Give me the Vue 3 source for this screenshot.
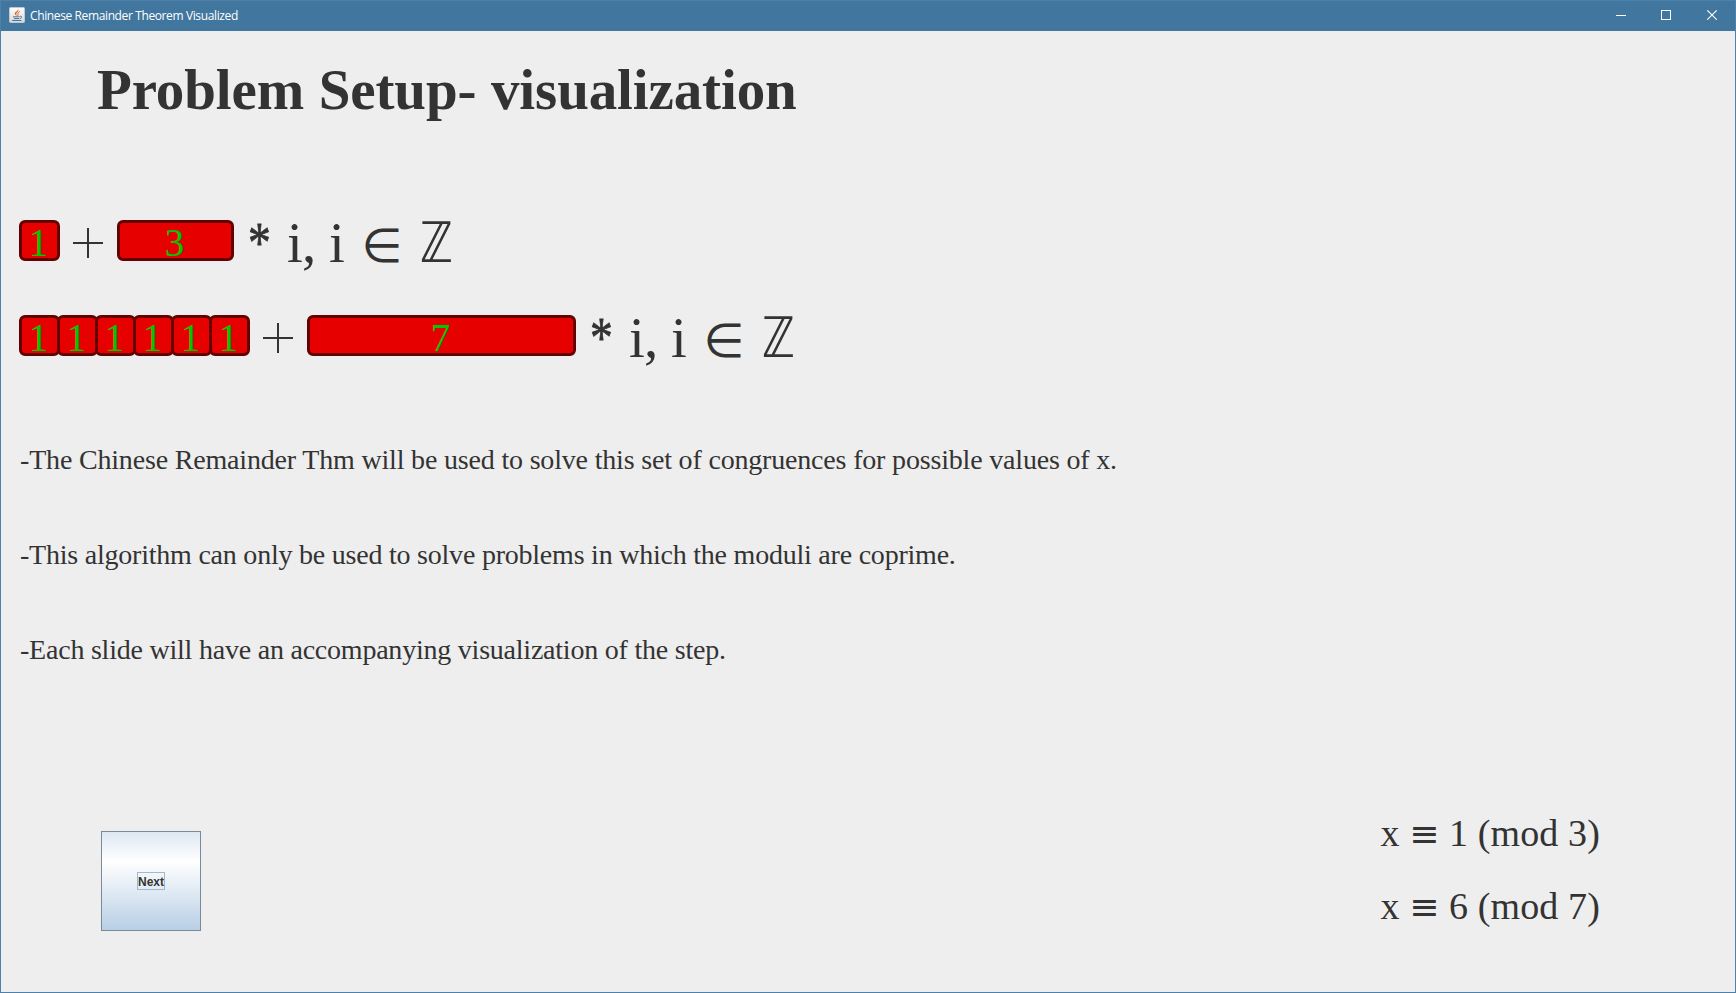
<script setup>
const rows = [
  { ones: 1, modulus: 3 },
  { ones: 6, modulus: 7 },
]
const congruences = [
  { r: 1, m: 3 },
  { r: 6, m: 7 },
]
const UNIT = 38
</script>

<template>
  <div class="window">
    <header class="titlebar">
      <svg class="java" width="16" height="16" viewBox="0 0 16 16">
        <defs>
          <linearGradient id="jbg" x1="0" y1="0" x2="0" y2="1">
            <stop offset="0" stop-color="#ffffff" />
            <stop offset="1" stop-color="#d3d6d9" />
          </linearGradient>
        </defs>
        <rect x="0.5" y="0.5" width="15" height="15" rx="1" fill="url(#jbg)" stroke="#c3c8cc" />
        <path d="M9 1.6C9.8 4.4 4.8 5 6 7.2L7.6 9.2C7.6 7.4 6.6 7 8 5.6S9.8 3.6 9 1.6Z" fill="#e2601f" />
        <path d="M10.8 4.4C7.6 6 9.8 7 8.6 9" fill="none" stroke="#e2601f" />
        <path d="M4 9.8H10.5M5 11.6H10M3.2 13.5H12.4" fill="none" stroke="#4f7391" />
        <path d="M10.8 9.3C13.8 9.2 12.8 11 10.6 11.8" fill="none" stroke="#4f7391" />
      </svg>
      <span class="caption">Chinese Remainder Theorem Visualized</span>
      <svg class="controls" width="106" height="12" viewBox="0 0 106 12" fill="none" stroke="#fff">
        <path d="M0 6.5H10" />
        <rect x="45.5" y="1.5" width="9" height="9" />
        <path d="M91.3 1.3L100.7 10.7M100.7 1.3L91.3 10.7" stroke-width="1.2" />
      </svg>
    </header>

    <main class="content">
      <h1 class="heading">Problem Setup- visualization</h1>

      <section class="equations">
        <div v-for="row in rows" :key="row.modulus" class="equation">
          <div class="units">
            <span v-for="n in row.ones" :key="n" class="block unit">1</span>
          </div>
          <svg class="plus" width="30" height="30" viewBox="0 0 30 30" role="img" aria-label="+">
            <path d="M0 15H30M15 0V30" stroke="#333" stroke-width="2" />
          </svg>
          <span class="block" :style="{ width: row.modulus * UNIT + 3 + 'px' }">{{ row.modulus }}</span>
          <div class="term">
            <span class="times">*</span>
            <span class="vars">i, i</span>
            <span class="in">∈</span>
            <span class="zz">ℤ</span>
          </div>
        </div>
      </section>

      <section class="notes">
        <p class="n1">-The Chinese Remainder Thm will be used to solve this set of congruences for possible values of x.</p>
        <p class="n2">-This algorithm can only be used to solve problems in which the moduli are coprime.</p>
        <p class="n3">-Each slide will have an accompanying visualization of the step.</p>
      </section>

      <footer class="bottom">
        <button class="next"><span>Next</span></button>
        <div class="congruences">
          <div v-for="c in congruences" :key="c.m">x <span class="equiv">≡</span> {{ c.r }} (mod {{ c.m }})</div>
        </div>
      </footer>
    </main>
  </div>
</template>

<style>
html,
body {
  margin: 0;
  overflow: hidden;
}
</style>

<style scoped>
.window {
  box-sizing: border-box;
  width: 1736px;
  height: 993px;
  border: 1px solid #4d80aa;
  background: #eee;
  color: #333;
  font-family: 'Liberation Serif', 'Times New Roman', serif;
  overflow: hidden;
}
.titlebar {
  display: flex;
  align-items: center;
  box-sizing: border-box;
  height: 30px;
  padding: 0 13px 2px 8px;
  background: #41769e;
}
.java {
  margin-right: 5px;
}
.caption {
  padding-top: 2px;
  color: #fff;
  font: 12px/16px 'Open Sans', sans-serif;
  letter-spacing: -0.38px;
  white-space: nowrap;
}
.controls {
  margin-left: auto;
}
.content {
  display: flex;
  flex-direction: column;
  height: 961px;
}
.heading {
  margin: 26px 0 0 96px;
  font-size: 57px;
  line-height: 66px;
  letter-spacing: -0.12px;
  word-spacing: 0.5px;
  white-space: nowrap;
}
.equations {
  display: flex;
  flex-direction: column;
  gap: 54px;
  margin: 97px 0 0 18px;
}
.equation {
  display: flex;
  align-items: center;
  height: 41px;
}
.units {
  display: flex;
}
.block {
  box-sizing: border-box;
  height: 41px;
  border: 3px solid #640000;
  border-radius: 6px;
  background: #e60000;
  color: #00c800;
  font-size: 39px;
  line-height: 39px;
  text-align: center;
  text-indent: -2px;
}
.unit {
  width: 41px;
}
.unit + .unit {
  margin-left: -3px;
}
.plus {
  margin: 5px 14px 0 13px;
}
.term {
  display: flex;
  align-items: baseline;
  margin: 4px 0 0 14px;
  font-size: 57px;
  line-height: 41px;
  white-space: nowrap;
}
.times {
  width: 39px;
  transform: scaleX(0.8);
  transform-origin: left;
  -webkit-text-stroke: 0.8px #333;
}
.vars {
  width: 74.5px;
  letter-spacing: -0.8px;
}
.in,
.zz {
  font-family: 'DejaVu Sans', sans-serif;
  line-height: 1px;
}
.in {
  width: 58.5px;
  font-size: 47px;
}
.zz {
  font-size: 56px;
  transform: scaleX(0.79);
  transform-origin: left;
}
.notes {
  margin: 88px 0 0 19px;
}
.notes p {
  height: 95px;
  margin: 0;
  font-size: 28px;
  line-height: 32px;
  white-space: nowrap;
}
.n1 {
  letter-spacing: -0.18px;
}
.n2,
.n3 {
  letter-spacing: -0.223px;
}
.bottom {
  display: flex;
  align-items: flex-start;
  justify-content: space-between;
  margin: 102px 135px 0 100px;
}
.next {
  display: flex;
  align-items: center;
  justify-content: center;
  width: 100px;
  height: 100px;
  padding: 0;
  border: 1px solid #7a8a99;
  background: linear-gradient(#dde8f3 0%, #fff 30%, #b8cfe5 100%);
}
.next span {
  box-sizing: border-box;
  width: 28px;
  height: 18px;
  border: 1px solid #a3b8cc;
  color: #333;
  font: bold 12px/18px 'Liberation Sans', Arial, sans-serif;
}
.congruences {
  margin-top: -34px;
  font-size: 38px;
  line-height: 73px;
  letter-spacing: 0.12px;
  white-space: nowrap;
}
.congruences div {
  height: 73px;
}
.equiv {
  font-family: 'DejaVu Sans', sans-serif;
  font-size: 36px;
  line-height: 1px;
}
</style>
